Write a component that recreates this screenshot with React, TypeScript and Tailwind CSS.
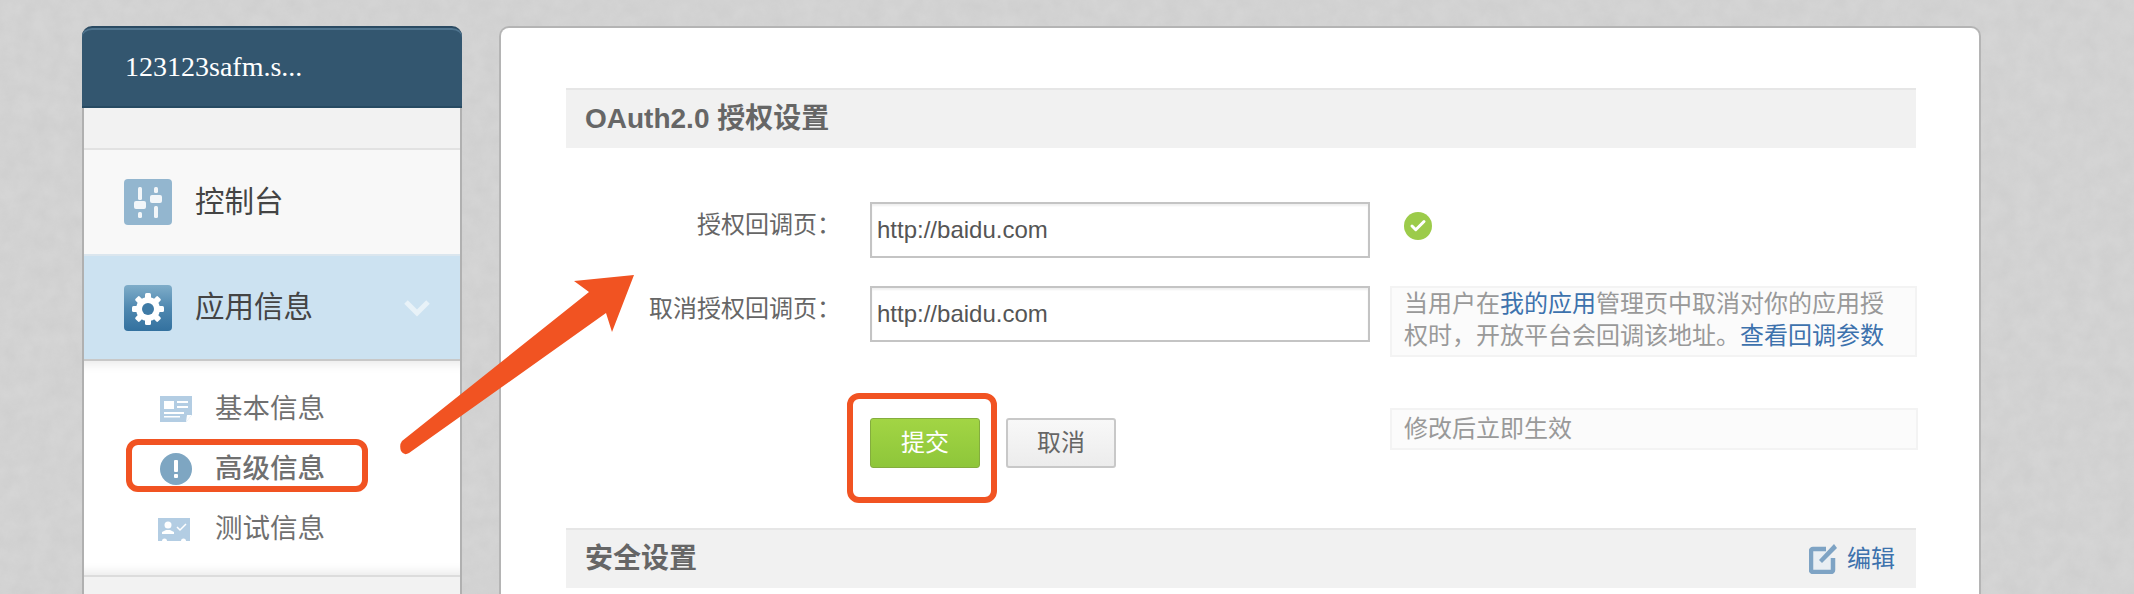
import { Check } from 'lucide-react';

function SliderIcon() {
  return (
    <svg width="48" height="46" viewBox="0 0 48 46">
      <rect width="48" height="46" rx="4" fill="#93b6cf" />
      <g fill="#f2f6f9">
        <rect x="14" y="8" width="4" height="13" rx="1.5" />
        <rect x="10" y="22" width="12" height="8" rx="2" />
        <rect x="14" y="33" width="4" height="6" rx="1.5" />
        <rect x="30" y="8" width="4" height="6" rx="1.5" />
        <rect x="26" y="16" width="12" height="8" rx="2" />
        <rect x="30" y="27" width="4" height="12" rx="1.5" />
      </g>
    </svg>
  );
}

function GearIcon() {
  return (
    <svg width="48" height="46" viewBox="0 0 48 46">
      <defs>
        <linearGradient id="gearbg" x1="0" y1="0" x2="0" y2="1">
          <stop offset="0" stopColor="#7fadc9" />
          <stop offset="0.5" stopColor="#4f88b0" />
          <stop offset="1" stopColor="#33719f" />
        </linearGradient>
      </defs>
      <rect width="48" height="46" rx="4" fill="url(#gearbg)" />
      <g fill="#fff">
        <circle cx="24" cy="24" r="12" />
        <rect x="21" y="8" width="6" height="32" rx="1.5" />
        <rect x="21" y="8" width="6" height="32" rx="1.5" transform="rotate(45 24 24)" />
        <rect x="21" y="8" width="6" height="32" rx="1.5" transform="rotate(90 24 24)" />
        <rect x="21" y="8" width="6" height="32" rx="1.5" transform="rotate(135 24 24)" />
      </g>
      <circle cx="24" cy="24" r="6" fill="#3f7ba6" />
    </svg>
  );
}

function CardIcon() {
  return (
    <svg width="32" height="26" viewBox="0 0 32 26">
      <path d="M0 0h32v19l-6 7H0z" fill="#b3cde3" />
      <rect x="4" y="5" width="10" height="8" fill="#fff" />
      <rect x="17" y="5" width="11" height="2" fill="#fff" />
      <rect x="17" y="10" width="11" height="2" fill="#fff" />
      <rect x="4" y="16" width="20" height="2" fill="#fff" />
      <rect x="4" y="20" width="16" height="1.5" fill="#fff" />
      <path d="M32 19h-5l-1 7z" fill="#fff" />
    </svg>
  );
}

function AlertIcon() {
  return (
    <svg width="32" height="32" viewBox="0 0 32 32">
      <circle cx="16" cy="16" r="16" fill="#7ea6c2" />
      <rect x="14" y="7" width="4" height="12" rx="1" fill="#fff" />
      <rect x="14" y="21" width="4" height="4" rx="1" fill="#fff" />
    </svg>
  );
}

function TicketIcon() {
  return (
    <svg className="-ml-[2px]" width="32" height="23" viewBox="0 0 32 23">
      <path d="M0 0h32v23h-4a2.500 2.500 0 0 0-5 0H9a2.500 2.500 0 0 0-5 0H0z" fill="#b3cde3" />
      <circle cx="10" cy="7" r="3.500" fill="#fff" />
      <path d="M4 16h12v-2l-4-2H8l-4 2z" fill="#fff" />
      <path d="M19 9l3 3 6-6" fill="none" stroke="#fff" strokeWidth="1.500" />
    </svg>
  );
}

function EditIcon() {
  return (
    <svg width="29" height="30" viewBox="0 0 29 30">
      <path d="M17 5H4a2 2 0 0 0-2 2v19a2 2 0 0 0 2 2h18a2 2 0 0 0 2-2V14" fill="#e9eef3" stroke="#7ea3c4" strokeWidth="4.500" />
      <path d="M10 16l3 3L28 4l-3-4z" fill="#7ea3c4" />
    </svg>
  );
}

function SubItem({ icon, label, bold }: { icon: React.ReactNode; label: string; bold?: boolean }) {
  return (
    <div className="flex h-[60px] items-center pl-[76px] text-[27.500px] text-[#707070]">
      <div className="flex w-[55px] shrink-0 items-center">{icon}</div>
      <span className={bold ? 'font-medium' : ''}>{label}</span>
    </div>
  );
}

function SectionTitle({ title, children }: { title: string; children?: React.ReactNode }) {
  return (
    <div className="flex h-[60px] items-center justify-between border-t-[2px] border-[#e6e6e6] bg-[#f1f1f1] pl-[19px] pr-[21px]">
      <h2 className="text-[28px] font-bold text-[#666]">{title}</h2>
      {children}
    </div>
  );
}

function UrlRow({ label, children }: { label: string; children: React.ReactNode }) {
  return (
    <div className="flex items-start">
      <label className="w-[304px] shrink-0 pt-[6px] pr-[29px] text-right text-[24px] leading-[34px] text-[#666]">{label}</label>
      <div className="flex h-[56px] w-[500px] shrink-0 items-center border-[2px] border-[#c4c4c4] pl-[5px] text-[24px] text-[#555] shadow-[inset_0_2px_2px_#f0f0f0]">
        http://baidu.com
      </div>
      {children}
    </div>
  );
}

export default function App() {
  return (
    <div className="relative h-[594px] overflow-hidden bg-[#d5d5d5] font-['Liberation_Sans','Noto_Sans_CJK_SC',sans-serif]">
      {/* paper texture */}
      <svg className="absolute inset-0 h-full w-full opacity-[0.12]">
        <filter id="paper">
          <feTurbulence type="fractalNoise" baseFrequency="0.06" numOctaves="4" />
          <feColorMatrix values="0 0 0 0 0.4 0 0 0 0 0.4 0 0 0 0 0.4 0 0 0 1.6 -0.3" />
        </filter>
        <rect width="100%" height="100%" filter="url(#paper)" />
      </svg>

      <div className="relative flex items-start gap-[37px] pt-[26px] pl-[82px]">
        {/* Sidebar */}
        <aside className="h-[600px] w-[380px] shrink-0 rounded-t-[10px] border-x-[2px] border-[#b0b0b0] bg-[#f2f2f2]">
          <div className="-mx-[2px] flex h-[82px] items-center rounded-t-[10px] border-t-[2px] border-b-[2px] border-t-[#2a4a62] border-b-[#274a62] bg-[#33566f] pl-[43px] font-['Liberation_Serif',serif] text-[28px] text-white shadow-[inset_0_2px_0_#50758f]">
            123123safm.s...
          </div>
          <div className="h-[42px] border-b-[2px] border-[#e2e2e2]" />
          <div className="flex h-[104px] items-center bg-[#f8f8f8] pl-[40px]">
            <SliderIcon />
            <span className="ml-[23px] text-[29.500px] text-[#444]">控制台</span>
          </div>
          <div className="flex h-[107px] items-center border-t-[2px] border-b-[2px] border-t-[#dbe6ee] border-b-[#c8c8c8] bg-[#cce2f1] pl-[40px]">
            <GearIcon />
            <span className="ml-[23px] text-[29.500px] text-[#444]">应用信息</span>
            <svg className="ml-[90px]" width="28" height="18" viewBox="0 0 28 18">
              <path d="M3 3l11 11L25 3" fill="none" stroke="#e8f2f8" strokeWidth="5" />
            </svg>
          </div>
          <div className="h-[214px] bg-white pt-[18px] shadow-[inset_0_12px_10px_-8px_#ececec,inset_0_-12px_10px_-8px_#ececec]">
            <SubItem icon={<CardIcon />} label="基本信息" />
            <SubItem icon={<AlertIcon />} label="高级信息" bold />
            <SubItem icon={<TicketIcon />} label="测试信息" />
          </div>
          <div className="border-t-[2px] border-[#dcdcdc]" />
        </aside>

        {/* Main panel */}
        <main className="h-[600px] w-[1482px] shrink-0 rounded-t-[10px] border-x-[2px] border-t-[2px] border-[#b4b4b4] bg-white pt-[60px] pr-[63px] pl-[65px]">
          <SectionTitle title="OAuth2.0 授权设置" />

          <div className="mt-[54px] flex flex-col gap-[28px]">
            <UrlRow label="授权回调页：">
              <div className="ml-[34px] mt-[10px] flex h-[28px] w-[28px] shrink-0 items-center justify-center rounded-full bg-[#9ccb4a]">
                <Check size={18} strokeWidth={4} className="text-white" />
              </div>
            </UrlRow>
            <UrlRow label="取消授权回调页：">
              <div className="ml-[20px] h-[71px] w-[527px] shrink-0 whitespace-nowrap border-[2px] border-[#f3f3f3] bg-[#fbfbfb] pl-[12px] text-[24px] leading-[32px] text-[#999]">
                <div>当用户在<a className="text-[#3d72ad]">我的应用</a>管理页中取消对你的应用授</div>
                <div>权时，开放平台会回调该地址。<a className="text-[#3d72ad]">查看回调参数</a></div>
              </div>
            </UrlRow>
          </div>

          <div className="mt-[61px] flex items-start">
            <button className="ml-[304px] h-[50px] w-[110px] shrink-0 rounded-[3px] border border-[#84ad3e] bg-gradient-to-b from-[#a2d544] to-[#8ec63a] text-[24px] text-white">提交</button>
            <button className="ml-[26px] h-[50px] w-[110px] shrink-0 rounded-[3px] border-[2px] border-[#c8c8c8] bg-gradient-to-b from-[#f8f8f8] to-[#ececec] text-[24px] text-[#666]">取消</button>
            <div className="-mt-[10px] ml-[274px] flex h-[42px] w-[528px] shrink-0 items-center border-[2px] border-[#f3f3f3] bg-[#fbfbfb] pl-[12px] text-[24px] text-[#999]">修改后立即生效</div>
          </div>

          <div className="mt-[60px]">
            <SectionTitle title="安全设置">
              <a className="flex items-center gap-[9px] text-[24px] text-[#3d72ad]"><EditIcon />编辑</a>
            </SectionTitle>
          </div>
        </main>
      </div>

      {/* red annotations drawn over the page */}
      <div className="absolute top-[439px] left-[126px] h-[53px] w-[242px] rounded-[12px] border-[6px] border-[#f15322]" />
      <div className="absolute top-[393px] left-[847px] h-[110px] w-[150px] rounded-[12px] border-[6px] border-[#f15322]" />
      <svg className="absolute top-[260px] left-[395px]" width="250" height="200" viewBox="395 260 250 200">
        <path d="M402 441L589 292L574 281L634 275L612 332L606 313L409 453Q404 456 401 451Q399 445 402 441z" fill="#f15322" />
      </svg>
    </div>
  );
}
